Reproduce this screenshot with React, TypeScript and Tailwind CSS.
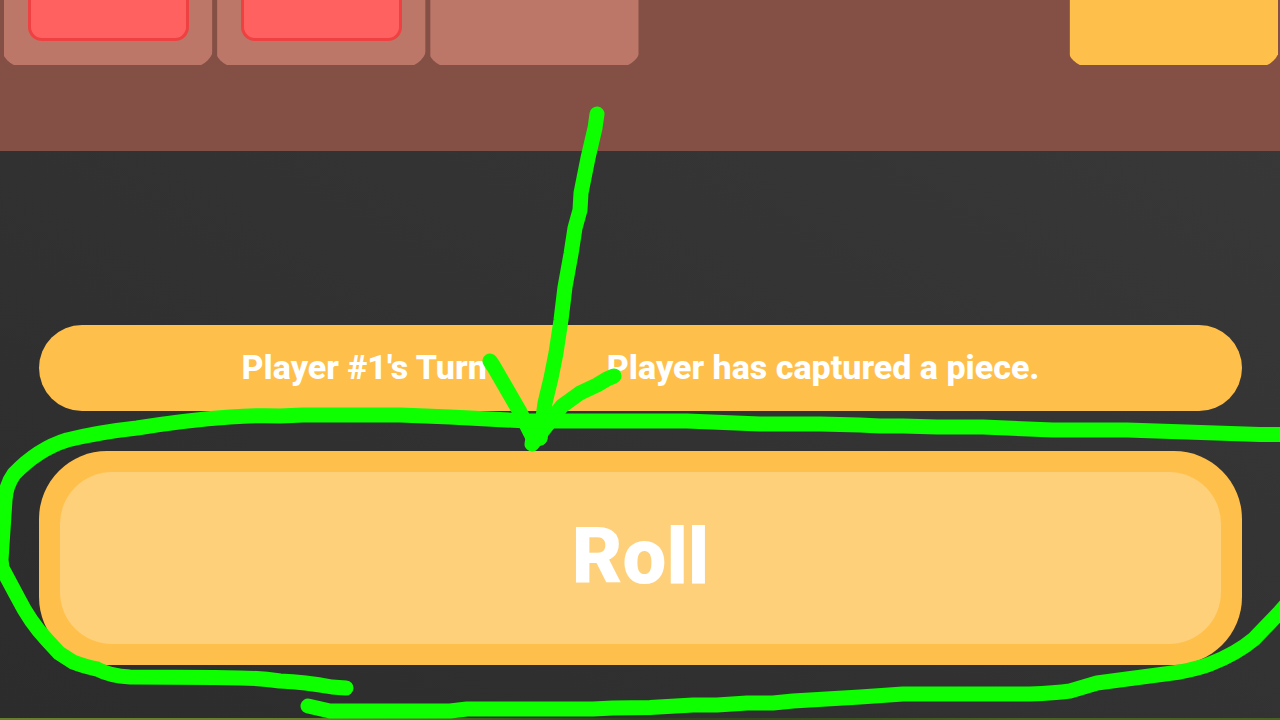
import React from 'react';
import { clsx } from 'clsx';

type Cell = 'piece' | 'empty' | 'none' | 'goal';

const CELLS: Cell[] = ['piece', 'piece', 'empty', 'none', 'none', 'goal'];

const MARKS = [
  // arrow
  'M597 114L595 128L588 158L581 193L580 210L575 228L571 254L565 287L561 320L556 353L551 378L545 403L540 438',
  'M490 361L494 367L520 412L532 436L540 438',
  'M614 376L607 379L597 385L580 393L562 406L548 424L532 444L534 432',
  // ring around the roll button
  'M346 688L332 687Q305 682 280 681Q260 678 240 678L215 677.5L130 677Q110 676 97 669Q86 667 73 662L59 653L47 640Q30 622 18 598L2 568L1 560L5 500Q6 485 14 474Q38 449 67 440Q100 432 137 428Q187 420 230 417Q260 415 280 416L303 415L400 415L450 417L527 421L573 421L687 421L760 424L820 424L860 425L880 426L903 426L937 427L983 427L1053 430L1127 430L1260 434.5L1295 434.5',
  'M1292 598L1280 612L1254 639Q1236 654 1210 664Q1200 668 1180 672L1127 679L1097 683L1070 691Q1055 693 1030 694L903 694L860 697L793 701L773 703L747 703L717 705L693 705L650 707.5L613 708L593 709L467 709L450 711L330 711L308 706',
];

function BoardCell({ kind }: { kind: Cell }) {
  if (kind === 'none') return <div />;
  return (
    <div
      className={clsx(
        'h-[67px] rounded-b-[22px] pl-[27px] pr-[25px] [clip-path:inset(0_2px_2px_3px)]',
        kind === 'goal' ? 'bg-[#ffbf4b]' : 'bg-[#bc7769]'
      )}
    >
      {kind === 'piece' && (
        <div className="h-[41px] rounded-b-[14px] border-3 border-t-0 border-[#ef4141] bg-[#ff6161]" />
      )}
    </div>
  );
}

export default function App() {
  return (
    <div className="relative flex min-h-screen flex-col overflow-hidden bg-linear-to-tr from-[#2c2c2c] to-[#393939] font-[Roboto,sans-serif] text-white">
      {/* Board */}
      <section className="grid grid-cols-6 bg-[#844f45] pb-[84px] pl-px">
        {CELLS.map((kind, index) => (
          <BoardCell key={index} kind={kind} />
        ))}
      </section>

      {/* Status and roll */}
      <main className="mt-auto flex flex-col gap-10 pb-[53px] pl-[39px] pr-[38px]">
        <div className="flex h-[86px] items-center justify-center gap-[120px] rounded-full bg-[#ffbf4b] pb-0.5 text-[34px] font-extrabold">
          <p>Player #1's Turn</p>
          <p>Player has captured a piece.</p>
        </div>
        <button className="rounded-[68px] bg-[#ffbf4b] p-[21px]">
          <span className="flex h-[172px] items-center justify-center rounded-[52px] bg-[#fed07a] pb-1 text-[78px] font-black">
            Roll
          </span>
        </button>
      </main>
      <div className="h-0.5 bg-linear-to-r from-[#64802a] from-25% via-[#28401b] via-50% to-[#466420] to-80%" />

      <svg
        className="pointer-events-none absolute inset-0 h-full w-full"
        viewBox="0 0 1280 720"
        fill="none"
        stroke="#0dff00"
        strokeWidth={15}
        strokeLinecap="round"
        strokeLinejoin="round"
        aria-hidden="true"
      >
        {MARKS.map((d) => (
          <path key={d} d={d} />
        ))}
      </svg>
    </div>
  );
}
